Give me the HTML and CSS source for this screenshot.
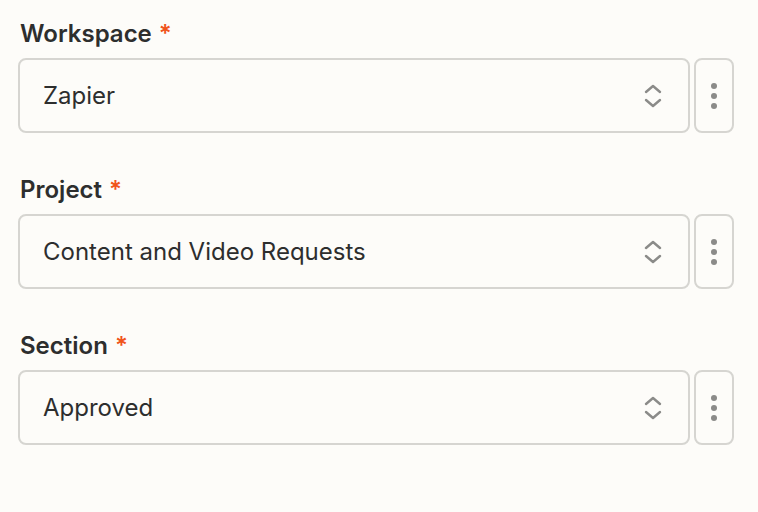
FILE: index.html
```html
<!DOCTYPE html>
<html>
<head>
<meta charset="utf-8">
<link rel="stylesheet" href="styles.css">
</head>
<body>
<div class="form">
  <div class="field">
    <div class="label">Workspace <span class="req">*</span></div>
    <div class="row">
      <div class="select">
        <span class="value">Zapier</span>
        <svg class="chev" width="18" height="24" viewBox="0 0 18 24"><path d="M2 8 L9 2 L16 8 M2 16 L9 22 L16 16" fill="none" stroke="#8b8b89" stroke-width="2.4" stroke-linecap="round" stroke-linejoin="round"/></svg>
      </div>
      <div class="more"><span></span><span></span><span></span></div>
    </div>
  </div>
  <div class="field">
    <div class="label">Project <span class="req">*</span></div>
    <div class="row">
      <div class="select">
        <span class="value">Content and Video Requests</span>
        <svg class="chev" width="18" height="24" viewBox="0 0 18 24"><path d="M2 8 L9 2 L16 8 M2 16 L9 22 L16 16" fill="none" stroke="#8b8b89" stroke-width="2.4" stroke-linecap="round" stroke-linejoin="round"/></svg>
      </div>
      <div class="more"><span></span><span></span><span></span></div>
    </div>
  </div>
  <div class="field">
    <div class="label">Section <span class="req">*</span></div>
    <div class="row">
      <div class="select">
        <span class="value">Approved</span>
        <svg class="chev" width="18" height="24" viewBox="0 0 18 24"><path d="M2 8 L9 2 L16 8 M2 16 L9 22 L16 16" fill="none" stroke="#8b8b89" stroke-width="2.4" stroke-linecap="round" stroke-linejoin="round"/></svg>
      </div>
      <div class="more"><span></span><span></span><span></span></div>
    </div>
  </div>
</div>
</body>
</html>
```
FILE: styles.css
```css
html, body {
  margin: 0;
  padding: 0;
  background: #fdfcf9;
}
body {
  font-family: Inter, "Noto Sans", sans-serif;
  color: #2d2e2e;
}
.form {
  padding: 17px 24px 0 18px;
  display: flex;
  flex-direction: column;
  gap: 40px;
}
.field {
  display: flex;
  flex-direction: column;
}
.label {
  font-size: 24px;
  font-weight: 600;
  line-height: 34px;
  padding-left: 2px;
  margin-bottom: 7px;
}
.req {
  color: #f0541c;
  margin-left: 1px;
}
.row {
  display: flex;
  gap: 4px;
  height: 75px;
}
.select {
  flex: 1;
  box-sizing: border-box;
  border: 2px solid #d6d5d1;
  border-radius: 8px;
  background: #fdfcf9;
  display: flex;
  align-items: center;
  padding: 0 26px 0 23px;
}
.value {
  flex: 1;
  font-size: 24px;
}
.chev {
  display: block;
}
.more {
  width: 40px;
  box-sizing: border-box;
  border: 2px solid #d6d5d1;
  border-radius: 8px;
  display: flex;
  flex-direction: column;
  align-items: center;
  justify-content: center;
  gap: 4px;
}
.more span {
  width: 6px;
  height: 6px;
  border-radius: 50%;
  background: #8b8b89;
}
```
